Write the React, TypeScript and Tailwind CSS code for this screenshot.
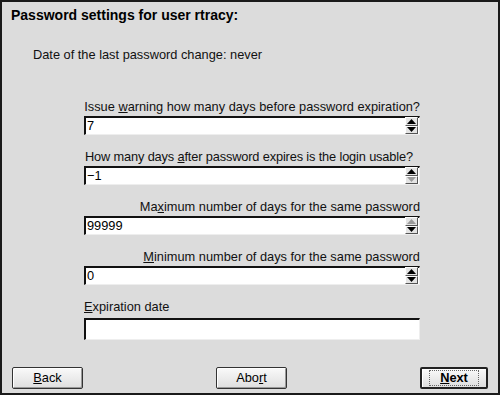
import React from "react";

const font = { fontFamily: '"Liberation Sans", Arial, sans-serif' };

function Arrow({ up, disabled }: { up: boolean; disabled?: boolean }) {
  return (
    <div className="h-[9px] w-full flex items-center justify-center bg-[#e4e4e4] border-t border-l border-t-white border-l-white border-b border-r border-b-[#555] border-r-[#555]">
      <svg width="9" height="5" viewBox="0 0 9 5">
        <polygon
          points={up ? "0,5 9,5 4.5,0" : "0,0 9,0 4.5,5"}
          fill={disabled ? "#9a9a9a" : "#000"}
        />
      </svg>
    </div>
  );
}

function SpinField({
  label,
  value,
  upOff,
  downOff,
}: {
  label: React.ReactNode;
  value: string;
  upOff?: boolean;
  downOff?: boolean;
}) {
  return (
    <div className="flex flex-col">
      <div className="h-[16px] whitespace-nowrap text-right text-[12.8px] leading-[16px] text-[#111]">{label}</div>
      <div className="mt-[1px] h-[19px] flex bg-white border-t-2 border-l-2 border-t-[#111] border-l-[#111] border-b border-r border-b-[#eee] border-r-[#eee]">
        <div className="flex-1 text-[12.8px] leading-[16px] pl-[1px] text-black">{value}</div>
        <div className="w-[13px] flex flex-col mr-[1px] mt-[-1px]">
          <Arrow up disabled={upOff} />
          <Arrow up={false} disabled={downOff} />
        </div>
      </div>
    </div>
  );
}

function Btn({ children, focus }: { children: React.ReactNode; focus?: boolean }) {
  return (
    <button
      className={
        "h-[22px] rounded-[2px] bg-gradient-to-b from-[#fafafa] to-[#dedede] text-[12.8px] text-black flex items-center justify-center " +
        (focus
          ? "w-[68px] border-2 border-[#222] shadow-[inset_1px_1px_0_#fff]"
          : "w-[71px] border border-[#333] shadow-[inset_1px_1px_0_#fff,inset_-1px_-1px_0_#999]")
      }
    >
      {focus ? (
        <span className="px-[10px] border border-dotted border-[#666] leading-[14px] font-bold">{children}</span>
      ) : (
        children
      )}
    </button>
  );
}

export default function App() {
  return (
    <div
      className="w-[500px] h-[395px] bg-[#dcdcdc] border-2 border-[#1a1a1a] flex flex-col overflow-hidden"
      style={font}
    >
      <div className="pl-[9px] pt-[4px] h-[20px] text-[14px] font-bold leading-[18px] text-black">
        Password settings for user rtracy:
      </div>
      <div className="pl-[31px] mt-[25px] text-[12.8px] leading-[16px] text-[#111]">
        Date of the last password change: never
      </div>
      <div className="ml-[82px] w-[336px] mt-[36px] flex flex-col gap-[14px]">
        <SpinField
          label={
            <>
              Issue <u>w</u>arning how many days before password expiration?
            </>
          }
          value="7"
        />
        <SpinField
          label={
            <span className="block text-left ml-[1px] tracking-[-0.15px]">
              How many days <u>a</u>fter password expires is the login usable?
            </span>
          }
          value="−1"
          downOff
        />
        <SpinField
          label={
            <>
              Ma<u>x</u>imum number of days for the same password
            </>
          }
          value="99999"
          upOff
        />
        <SpinField
          label={
            <>
              <u>M</u>inimum number of days for the same password
            </>
          }
          value="0"
        />
        <div className="flex flex-col">
          <div className="h-[16px] text-[12.8px] leading-[16px] text-[#111]">
            <u>E</u>xpiration date
          </div>
          <div className="mt-[3px] h-[22px] bg-white border-t-2 border-l-2 border-t-[#111] border-l-[#111] border-b border-r border-b-[#eee] border-r-[#eee]" />
        </div>
      </div>
      <div className="mt-auto mb-[4px] px-[10px] flex items-center justify-between">
        <Btn>
          <u>B</u>ack
        </Btn>
        <Btn>
          Abo<u>r</u>t
        </Btn>
        <Btn focus>
          <u>N</u>ext
        </Btn>
      </div>
    </div>
  );
}
